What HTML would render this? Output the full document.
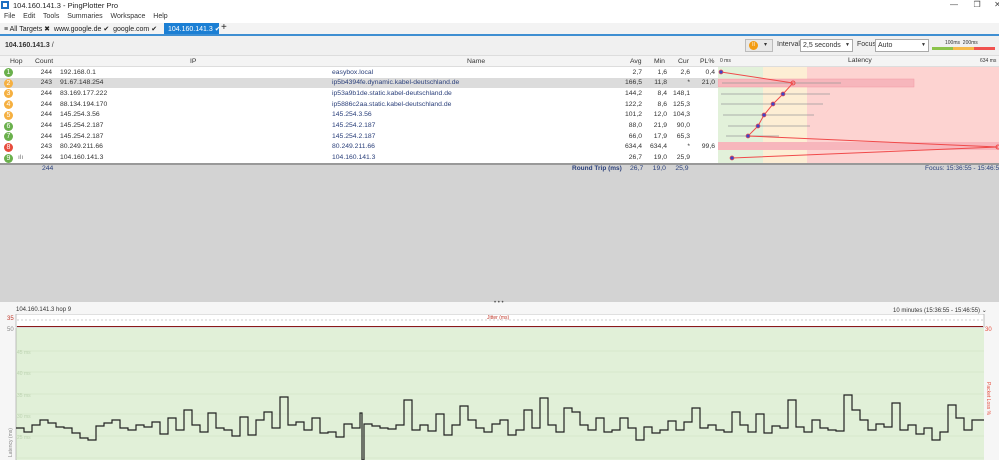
<!DOCTYPE html>
<html><head><meta charset="utf-8"><style>
*{margin:0;padding:0;box-sizing:border-box}
body{width:999px;height:460px;overflow:hidden;background:#fff;font-family:"Liberation Sans",sans-serif;font-size:7px;color:#333;position:relative}
.a{position:absolute;white-space:nowrap}
.row{position:absolute;left:0;width:718px;height:10.7px;font-size:6.8px;color:#333}
.row span{position:absolute;top:1.5px}
.c{color:#2a3f7a}
.hop{position:absolute;left:4px;top:1px;width:9px;height:9px;border-radius:50%;color:#fff;font-size:7px;text-align:center;line-height:9px}
.r{text-align:right}
</style></head><body>
<div class="a" style="left:0;top:0;width:999px;height:11px;background:#fff"></div>
<div class="a" style="left:1px;top:1px;width:8px;height:8px;background:#1d6fc2;border:1px solid #1d6fc2"><div style="margin:1px;width:4px;height:4px;background:#fff"></div></div>
<div class="a" style="left:13px;top:1px;font-size:7.5px;color:#222">104.160.141.3 - PingPlotter Pro</div>
<div class="a" style="left:950px;top:0;font-size:8px;color:#444">—&nbsp;&nbsp;&nbsp;&nbsp;&nbsp;&nbsp;&nbsp;❐&nbsp;&nbsp;&nbsp;&nbsp;&nbsp;&nbsp;✕</div>
<div class="a" style="left:4px;top:13px;font-size:7px;color:#333;word-spacing:2px">File&nbsp; Edit&nbsp; Tools&nbsp; Summaries&nbsp; Workspace&nbsp; Help</div>
<div class="a" style="left:0;top:23px;width:999px;height:12px;background:#f3f3f3"></div>
<div class="a" style="left:4px;top:25px;font-size:7px;color:#222">≡ All Targets ✖ &nbsp;www.google.de ✔ &nbsp;google.com ✔</div>
<div class="a" style="left:164px;top:23px;width:55px;height:11px;background:#1b7fd4;color:#fff;font-size:7px;padding:2px 0 0 4px">104.160.141.3 ✔</div>
<div class="a" style="left:221px;top:22px;font-size:10px;color:#222">+</div>
<div class="a" style="left:0;top:34px;width:999px;height:2px;background:#3f8fd2"></div>
<div class="a" style="left:0;top:36px;width:999px;height:20px;background:#f0f0f0;border-bottom:1px solid #ddd"></div>
<div class="a" style="left:5px;top:42px;font-size:7px;font-weight:bold;color:#333">104.160.141.3 <span style="font-weight:normal">/</span></div>
<div class="a" style="left:745px;top:39px;width:28px;height:13px;border:1px solid #bbb;background:#e8e8e8"></div>
<div class="a" style="left:749px;top:41px;width:9px;height:9px;border-radius:50%;background:#f39c12;color:#fff;font-size:5px;text-align:center;line-height:9px">II</div>
<div class="a" style="left:764px;top:41px;font-size:6px">▾</div>
<div class="a" style="left:777px;top:41px;font-size:7px">Interval</div>
<div class="a" style="left:800px;top:39px;width:53px;height:13px;border:1px solid #aaa;background:#fff;font-size:7px;padding:2px 2px">2,5 seconds<span style="float:right;font-size:5px">▼</span></div>
<div class="a" style="left:857px;top:41px;font-size:7px">Focus</div>
<div class="a" style="left:875px;top:39px;width:54px;height:13px;border:1px solid #aaa;background:#fff;font-size:7px;padding:2px 2px">Auto<span style="float:right;font-size:5px">▼</span></div>
<div class="a" style="left:945px;top:40px;font-size:5px">100ms &nbsp;200ms</div>
<div class="a" style="left:932px;top:47px;width:21px;height:3px;background:#8bc34a"></div>
<div class="a" style="left:953px;top:47px;width:21px;height:3px;background:#f6b94a"></div>
<div class="a" style="left:974px;top:47px;width:21px;height:3px;background:#f0524f"></div>
<div class="a" style="left:0;top:56px;width:999px;height:11px;background:#f4f4f4;border-bottom:1px solid #ddd"></div>
<div class="a" style="left:10px;top:58px;font-size:6.8px">Hop</div>
<div class="a" style="left:35px;top:58px;font-size:6.8px">Count</div>
<div class="a" style="left:190px;top:58px;font-size:6.8px">IP</div>
<div class="a" style="left:467px;top:58px;font-size:6.8px">Name</div>
<div class="a" style="left:630px;top:58px;font-size:6.8px">Avg</div>
<div class="a" style="left:654px;top:58px;font-size:6.8px">Min</div>
<div class="a" style="left:678px;top:58px;font-size:6.8px">Cur</div>
<div class="a" style="left:700px;top:58px;font-size:6.8px">PL%</div>
<div class="a" style="left:720px;top:58px;font-size:5px">0 ms</div>
<div class="a" style="left:848px;top:57px;font-size:6.8px">Latency</div>
<div class="a" style="left:980px;top:58px;font-size:5px">634 ms</div>
<svg class="a" style="left:718px;top:67px" width="281" height="96">
<rect x="0" y="0" width="45" height="96" fill="#e2f1da"/>
<rect x="45" y="0" width="44" height="96" fill="#fdeed4"/>
<rect x="89" y="0" width="192" height="96" fill="#fdd3d1"/>
<rect x="0" y="12" width="196" height="8" fill="#f7b6bc" stroke="#f19aa4" stroke-width=".5"/>
<rect x="0" y="75" width="281" height="8" fill="#f7b6bc"/>
<g stroke="#999" stroke-width=".7">
<line x1="4" y1="16" x2="123" y2="16"/><line x1="3" y1="27" x2="112" y2="27"/><line x1="3" y1="37" x2="105" y2="37"/><line x1="5" y1="48" x2="96" y2="48"/><line x1="10" y1="59" x2="92" y2="59"/><line x1="8" y1="69" x2="61" y2="69"/>
</g>
<polyline fill="none" stroke="#f04a4a" stroke-width="1" points="3,5 75,16 65,27 55,37 46,48 40,59 30,69 280,80 14,91"/>
<g fill="#3d47c8" stroke="#f04a4a" stroke-width=".7">
<circle cx="3" cy="5" r="2"/><circle cx="65" cy="27" r="2"/><circle cx="55" cy="37" r="2"/><circle cx="46" cy="48" r="2"/><circle cx="40" cy="59" r="2"/><circle cx="30" cy="69" r="2"/><circle cx="14" cy="91" r="2"/>
</g>
<circle cx="75" cy="16" r="2" fill="none" stroke="#f04a4a"/><circle cx="280" cy="80" r="2" fill="none" stroke="#f04a4a"/>
</svg>
<div class="row" style="top:67px"><div class="hop" style="background:#6ab04c">1</div><span class="r" style="left:30px;width:22px">244</span><span style="left:60px">192.168.0.1</span><span class="c" style="left:332px">easybox.local</span><span class="r" style="left:622px;width:20px">2,7</span><span class="r" style="left:645px;width:22px">1,6</span><span class="r" style="left:670px;width:20px">2,6</span><span class="r" style="left:695px;width:20px">0,4</span></div>
<div class="row" style="top:77.7px;background:#dcdcdc"><div class="hop" style="background:#f5b041">2</div><span class="r" style="left:30px;width:22px">243</span><span style="left:60px">91.67.148.254</span><span class="c" style="left:332px">ip5b4394fe.dynamic.kabel-deutschland.de</span><span class="r" style="left:622px;width:20px">166,5</span><span class="r" style="left:645px;width:22px">11,8</span><span class="r" style="left:670px;width:20px">*</span><span class="r" style="left:695px;width:20px">21,0</span></div>
<div class="row" style="top:88.4px"><div class="hop" style="background:#f5b041">3</div><span class="r" style="left:30px;width:22px">244</span><span style="left:60px">83.169.177.222</span><span class="c" style="left:332px">ip53a9b1de.static.kabel-deutschland.de</span><span class="r" style="left:622px;width:20px">144,2</span><span class="r" style="left:645px;width:22px">8,4</span><span class="r" style="left:670px;width:20px">148,1</span></div>
<div class="row" style="top:99.1px"><div class="hop" style="background:#f5b041">4</div><span class="r" style="left:30px;width:22px">244</span><span style="left:60px">88.134.194.170</span><span class="c" style="left:332px">ip5886c2aa.static.kabel-deutschland.de</span><span class="r" style="left:622px;width:20px">122,2</span><span class="r" style="left:645px;width:22px">8,6</span><span class="r" style="left:670px;width:20px">125,3</span></div>
<div class="row" style="top:109.8px"><div class="hop" style="background:#f5b041">5</div><span class="r" style="left:30px;width:22px">244</span><span style="left:60px">145.254.3.56</span><span class="c" style="left:332px">145.254.3.56</span><span class="r" style="left:622px;width:20px">101,2</span><span class="r" style="left:645px;width:22px">12,0</span><span class="r" style="left:670px;width:20px">104,3</span></div>
<div class="row" style="top:120.5px"><div class="hop" style="background:#6ab04c">6</div><span class="r" style="left:30px;width:22px">244</span><span style="left:60px">145.254.2.187</span><span class="c" style="left:332px">145.254.2.187</span><span class="r" style="left:622px;width:20px">88,0</span><span class="r" style="left:645px;width:22px">21,9</span><span class="r" style="left:670px;width:20px">90,0</span></div>
<div class="row" style="top:131.2px"><div class="hop" style="background:#6ab04c">7</div><span class="r" style="left:30px;width:22px">244</span><span style="left:60px">145.254.2.187</span><span class="c" style="left:332px">145.254.2.187</span><span class="r" style="left:622px;width:20px">66,0</span><span class="r" style="left:645px;width:22px">17,9</span><span class="r" style="left:670px;width:20px">65,3</span></div>
<div class="row" style="top:141.9px"><div class="hop" style="background:#e74c3c">8</div><span class="r" style="left:30px;width:22px">243</span><span style="left:60px">80.249.211.66</span><span class="c" style="left:332px">80.249.211.66</span><span class="r" style="left:622px;width:20px">634,4</span><span class="r" style="left:645px;width:22px">634,4</span><span class="r" style="left:670px;width:20px">*</span><span class="r" style="left:695px;width:20px">99,6</span></div>
<div class="row" style="top:152.6px"><div class="hop" style="background:#6ab04c">9</div><span style="left:18px;color:#777">ılı</span><span class="r" style="left:30px;width:22px">244</span><span style="left:60px">104.160.141.3</span><span class="c" style="left:332px">104.160.141.3</span><span class="r" style="left:622px;width:20px">26,7</span><span class="r" style="left:645px;width:22px">19,0</span><span class="r" style="left:670px;width:20px">25,9</span></div>
<div class="a" style="left:0;top:163px;width:999px;height:140px;background:#d3d3d3;border-top:2px solid #999"></div>
<div class="a c" style="left:42px;top:165px;font-size:6.8px">244</div>
<div class="a c" style="left:572px;top:165px;font-size:6.5px;font-weight:bold">Round Trip (ms)</div>
<div class="a c" style="left:630px;top:165px;font-size:6.8px">26,7 &nbsp;&nbsp;&nbsp;&nbsp;19,0 &nbsp;&nbsp;&nbsp;&nbsp;25,9</div>
<div class="a c" style="left:925px;top:165px;font-size:6.5px">Focus: 15:36:55 - 15:46:55</div>
<div class="a" style="left:0;top:302px;width:999px;height:158px;background:#f6f6f6"></div>
<div class="a" style="left:494px;top:300px;font-size:6px;color:#555">• • •</div>
<div class="a" style="left:16px;top:307px;font-size:6px;color:#333">104.160.141.3 hop 9</div>
<div class="a" style="left:893px;top:307px;font-size:6px;color:#333">10 minutes (15:36:55 - 15:46:55) ⌄</div>
<div class="a" style="left:7px;top:316px;font-size:6px;color:#c0392b">35</div>
<div class="a" style="left:7px;top:327px;font-size:6px;color:#888">50</div>
<div class="a" style="left:985px;top:327px;font-size:6px;color:#e74c3c">30</div>
<svg class="a" style="left:0;top:314px" width="999" height="146">
<rect x="16" y="0" width="968" height="13" fill="#fff" stroke="#999" stroke-width=".6"/>
<line x1="17" y1="6" x2="983" y2="6" stroke="#999" stroke-width=".6" stroke-dasharray="2,2"/>
<text x="487" y="5" font-size="5" fill="#c0392b" font-family="Liberation Sans">Jitter (ms)</text>
<line x1="17" y1="12.5" x2="983" y2="12.5" stroke="#8b1a1a" stroke-width="1"/>
<rect x="16" y="14" width="968" height="132" fill="#e1f0d8"/>
<line x1="16" y1="14" x2="16" y2="146" stroke="#999" stroke-width=".6"/>
<g stroke="#d3e5c8" stroke-width=".7"><line x1="16" y1="37" x2="984" y2="37"/><line x1="16" y1="58" x2="984" y2="58"/><line x1="16" y1="80" x2="984" y2="80"/><line x1="16" y1="100" x2="984" y2="100"/><line x1="16" y1="122" x2="984" y2="122"/><line x1="16" y1="144" x2="984" y2="144"/></g>
<g font-size="5" fill="#bcd3b0" font-family="Liberation Sans"><text x="17" y="40">45 ms</text><text x="17" y="61">40 ms</text><text x="17" y="83">35 ms</text><text x="17" y="104">30 ms</text><text x="17" y="125">25 ms</text></g>
<text x="0" y="0" font-size="5" fill="#888" font-family="Liberation Sans" transform="translate(12,143) rotate(-90)">Latency (ms)</text>
<text x="0" y="0" font-size="5" fill="#e74c3c" font-family="Liberation Sans" transform="translate(987,68) rotate(90)">Packet Loss %</text>
<g transform="translate(0,-314)">
<path fill="none" stroke="#222" stroke-width="1.2" d="M16 428 H24 V432 H32 V425 H40 V420 H48 V423 H56 V427 H64 V428 H72 V433 H80 V438 H88 V440 H96 V426 H104 V423 H112 V420 H120 V428 H128 V430 H136 V425 H144 V427 H152 V422 H160 V434 H168 V418 H176 V430 H184 V410 H192 V425 H200 V432 H208 V413 H216 V428 H224 V430 H232 V436 H240 V417 H248 V435 H256 V420 H264 V412 H272 V428 H280 V397 H288 V425 H296 V422 H304 V430 H312 V418 H320 V433 H328 V432 H336 V437 H344 V424 H352 V428 H360 V413 H362 V460 H364 V424 H372 V426 H380 V428 H388 V429 H396 V425 H404 V400 H412 V430 H420 V425 H428 V431 H436 V414 H444 V435 H452 V425 H460 V406 H468 V420 H476 V428 H484 V432 H492 V424 H500 V420 H508 V435 H516 V430 H524 V410 H532 V428 H540 V398 H548 V425 H556 V432 H564 V408 H572 V412 H580 V425 H588 V430 H596 V418 H604 V432 H612 V430 H620 V418 H628 V428 H636 V440 H644 V427 H652 V433 H660 V430 H668 V421 H676 V430 H684 V422 H692 V408 H700 V428 H708 V425 H716 V430 H724 V432 H732 V412 H740 V425 H748 V432 H756 V414 H764 V433 H772 V426 H780 V428 H788 V400 H796 V427 H804 V432 H812 V420 H820 V428 H828 V430 H836 V431 H844 V395 H852 V410 H860 V420 H868 V430 H876 V424 H884 V427 H892 V403 H900 V430 H908 V425 H916 V434 H924 V428 H932 V440 H940 V432 H948 V405 H956 V418 H964 V430 H972 V420 H984"/>
</g>
</svg>
</body></html>
